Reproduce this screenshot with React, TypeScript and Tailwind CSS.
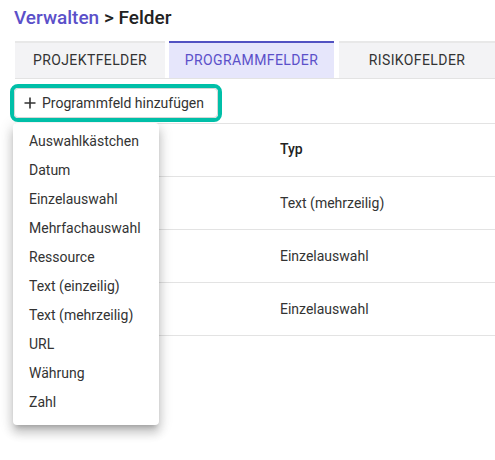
const menuItems = [
  "Auswahlkästchen",
  "Datum",
  "Einzelauswahl",
  "Mehrfachauswahl",
  "Ressource",
  "Text (einzeilig)",
  "Text (mehrzeilig)",
  "URL",
  "Währung",
  "Zahl",
];

const rows = ["Text (mehrzeilig)", "Einzelauswahl", "Einzelauswahl"];

const App = () => {
  return (
    <div className="relative w-[495px] h-[460px] overflow-hidden bg-white font-['Roboto',sans-serif] text-[#333]">
      <h1 className="pl-[14px] pt-[6px] h-[41px] text-[19px] font-medium leading-[24px]">
        <span className="text-[#5b50c9]">Verwalten</span>
        <span className="text-[#222]"> &gt; Felder</span>
      </h1>

      <div className="ml-[15px] flex border-b border-[#e3e3e3]">
        <div className="w-[150px] h-[37px] bg-[#f3f3f5] border-t-2 border-[#e8e8e8] flex items-center justify-center text-[14px] tracking-[0.4px] text-[#333]">
          PROJEKTFELDER
        </div>
        <div className="ml-[4px] w-[165px] h-[37px] bg-[#e6e6fb] border-t-2 border-[#5252c2] flex items-center justify-center text-[14px] tracking-[0.4px] text-[#5b50c9]">
          PROGRAMMFELDER
        </div>
        <div className="ml-[5px] flex-1 h-[37px] bg-[#f3f3f5] border-t-2 border-[#e8e8e8] flex items-center justify-center text-[14px] tracking-[0.4px] text-[#333]">
          RISIKOFELDER
        </div>
      </div>

      <div className="relative z-20 ml-[10px] mt-[5px] w-[212px] h-[38px] rounded-[8px] border-4 border-[#00bfa8]">
        <button className="w-full h-full rounded-[4px] border border-[#d6d6d6] bg-white flex items-center pl-[9px] text-[14px] text-[#333]">
          <svg width="12" height="12" viewBox="0 0 12 12" className="mr-[6px]">
            <path d="M6 0.5v11M0.5 6h11" stroke="#333" strokeWidth="1.6" />
          </svg>
          Programmfeld hinzufügen
        </button>
      </div>

      <div className="ml-[15px] mt-[1px] border-t border-[#e3e3e3]">
        <div className="flex h-[53px] items-center border-b border-[#e3e3e3] text-[14px] font-medium text-[#222]">
          <div className="w-[265px]" />
          <div className="pb-[1px]">Typ</div>
        </div>
        {rows.map((typ, i) => (
          <div key={i} className="flex h-[53px] items-center border-b border-[#e3e3e3] text-[14px] text-[#333]">
            <div className="w-[265px]" />
            <div>{typ}</div>
          </div>
        ))}
      </div>

      <div className="absolute z-10 left-[13px] top-[123px] w-[146px] rounded-[4px] bg-white pt-[4px] pb-[8px] shadow-[0_5px_5px_-3px_rgba(0,0,0,0.2),0_8px_10px_1px_rgba(0,0,0,0.14),0_3px_14px_2px_rgba(0,0,0,0.12)]">
        {menuItems.map((m) => (
          <div key={m} className="h-[29px] flex items-center pl-[16px] text-[14px] text-[#333]">
            {m}
          </div>
        ))}
      </div>
    </div>
  );
};

export default App;
